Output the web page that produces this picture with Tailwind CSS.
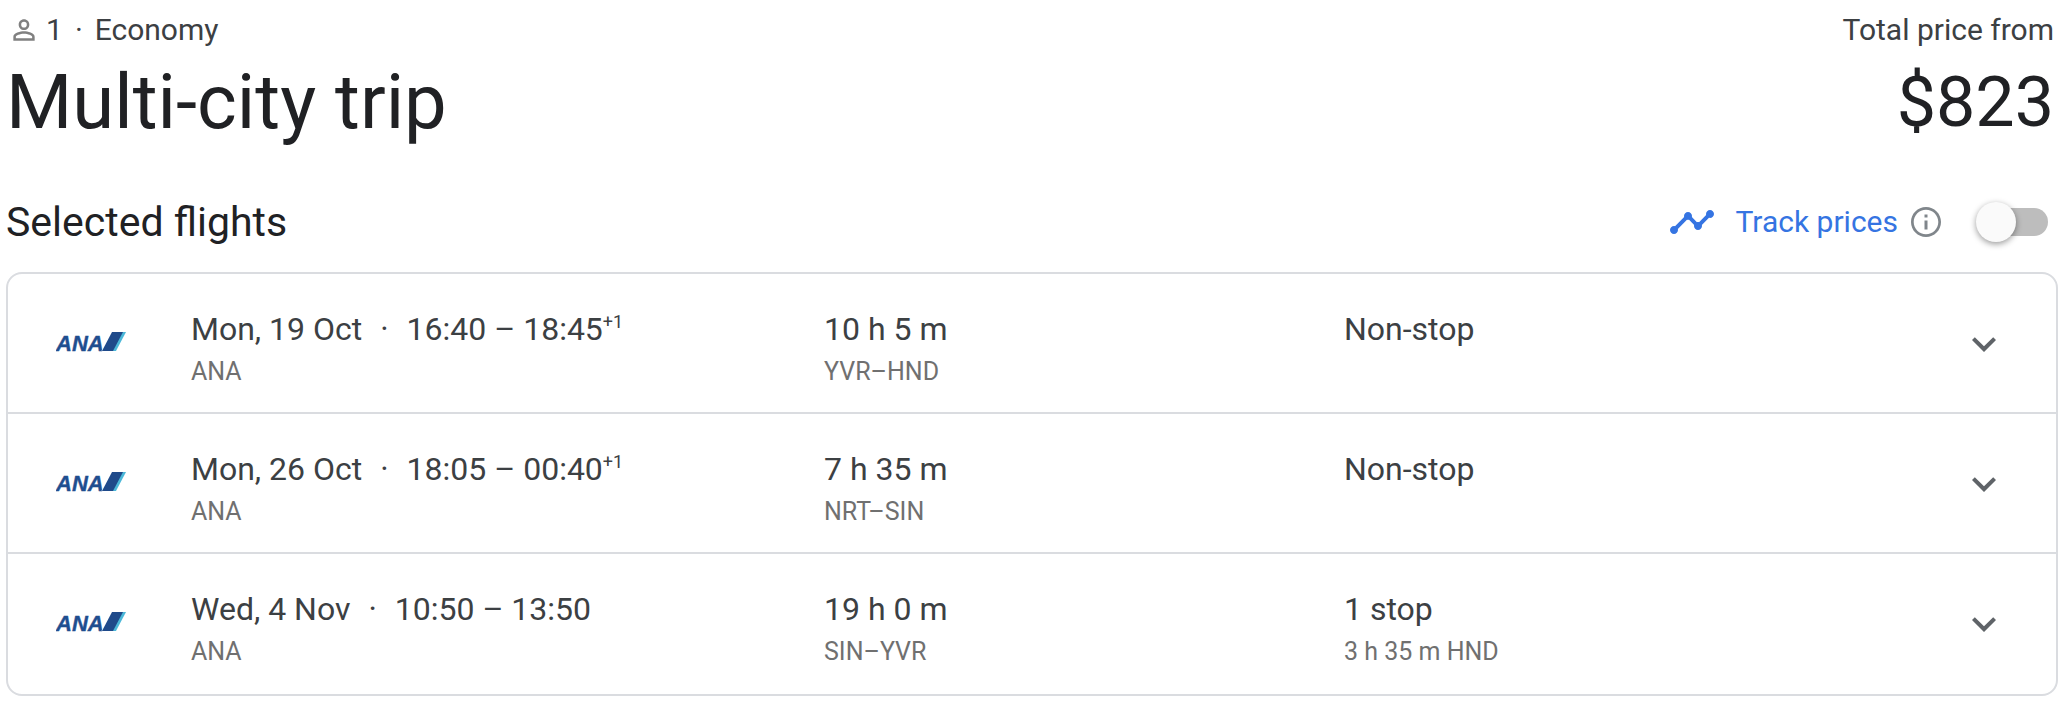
<!DOCTYPE html>
<html lang="en">
<head>
  <meta charset="UTF-8" />
  <meta name="viewport" content="width=device-width, initial-scale=1.0" />
  <title>Multi-city trip</title>
  <script src="https://cdn.jsdelivr.net/npm/@tailwindcss/browser@4"></script>
</head>
<body class="bg-white font-['Roboto',sans-serif] text-[#3c4043]">

  <!-- Shared icons -->
  <svg class="hidden" aria-hidden="true">
    <symbol id="ana" viewBox="0 0 72 20">
      <text x="0" y="19" font-family="Liberation Sans, sans-serif" font-size="22" font-weight="700" font-style="italic" fill="#1f4e8f" stroke="#1f4e8f" stroke-width="0.4">ANA</text>
      <path d="M56 0h12L58 19H46z" fill="#1f4a8a" stroke="#fff" stroke-width="1" paint-order="stroke" />
      <path d="M67 0h3L60 19h-3z" fill="#4cb8d8" />
    </symbol>
    <symbol id="chevron" viewBox="0 0 24 24">
      <path d="M7.41 8.59 12 13.17l4.59-4.58L18 10l-6 6-6-6z" />
    </symbol>
  </svg>

  <main class="pl-1.5 pr-3">
    <!-- Trip header -->
    <header class="flex justify-between pr-1 pt-2.5">
      <div>
        <div class="flex h-10 items-center text-[30px] leading-10">
          <svg class="ml-0.5 h-8 w-8 fill-[#808080]" viewBox="0 0 24 24" role="img" aria-label="Passengers">
            <path d="M12 5.9a2.1 2.1 0 1 1 0 4.2 2.1 2.1 0 0 1 0-4.2m0 9c2.97 0 6.1 1.46 6.1 2.1v1.1H5.9V17c0-.64 3.13-2.1 6.1-2.1M12 4C9.79 4 8 5.79 8 8s1.79 4 4 4 4-1.79 4-4-1.79-4-4-4zm0 9c-2.67 0-8 1.34-8 4v3h16v-3c0-2.66-5.33-4-8-4z" />
          </svg>
          <span class="ml-1.5">1</span>
          <span class="mx-3">·</span>
          <span>Economy</span>
        </div>
        <h1 class="text-[76px] leading-[104px] text-[#202124]">Multi-city trip</h1>
      </div>
      <div class="text-right">
        <p class="text-[30px] leading-10">Total price from</p>
        <p class="text-[70px] leading-[104px] text-[#202124]">$823</p>
      </div>
    </header>

    <!-- Selected flights heading and price tracking -->
    <div class="mt-8 flex h-[72px] items-center justify-between">
      <h2 class="text-[41px] leading-[56px] text-[#202124]">Selected flights</h2>
      <div class="flex items-center pr-2.5">
        <svg class="h-12 w-12 fill-[#3574e2]" viewBox="0 0 24 24" aria-hidden="true">
          <path d="M23 8c0 1.1-.9 2-2 2-.18 0-.35-.02-.51-.07l-3.56 3.55c.05.16.07.34.07.52 0 1.1-.9 2-2 2s-2-.9-2-2c0-.18.02-.36.07-.52l-2.55-2.55c-.16.05-.34.07-.52.07s-.36-.02-.52-.07l-4.55 4.56c.05.16.07.33.07.51 0 1.1-.9 2-2 2s-2-.9-2-2 .9-2 2-2c.18 0 .35.02.51.07l4.56-4.55C8.02 9.36 8 9.18 8 9c0-1.1.9-2 2-2s2 .9 2 2c0 .18-.02.36-.07.52l2.55 2.55c.16-.05.34-.07.52-.07s.36.02.52.07l3.55-3.56C19.02 8.35 19 8.18 19 8c0-1.1.9-2 2-2s2 .9 2 2z" />
        </svg>
        <label for="track" class="ml-5 text-[30px] leading-10 text-[#3574e2]">Track prices</label>
        <button type="button" class="ml-2.5" aria-label="About price tracking">
          <svg class="h-9 w-9 fill-[#80868b]" viewBox="0 0 24 24">
            <path d="M11 7h2v2h-2zm0 4h2v6h-2zm1-9C6.48 2 2 6.48 2 12s4.48 10 10 10 10-4.48 10-10S17.52 2 12 2zm0 18.2c-4.5 0-8.2-3.7-8.2-8.2S7.5 3.8 12 3.8s8.2 3.7 8.2 8.2-3.7 8.2-8.2 8.2z" />
          </svg>
        </button>
        <input id="track" type="checkbox" role="switch" class="ml-9 flex h-7 w-[68px] appearance-none items-center rounded-full bg-[#bdbdbd] before:-ml-1 before:block before:size-10 before:rounded-full before:bg-[#fafafa] before:shadow-[0_2px_6px_rgba(0,0,0,0.4)] checked:justify-end checked:bg-[#8ab4f8] checked:before:bg-[#1a73e8]" />
      </div>
    </div>

    <!-- Flights -->
    <ul class="mt-3.5 divide-y-2 divide-[#dadce0] rounded-2xl border-2 border-[#dadce0] pb-0.5">
      <li class="grid grid-cols-[183px_633fr_520fr_640fr_72px] pt-[35px] pb-7">
        <svg class="ml-12 mt-[23px] h-5 w-[72px]" role="img" aria-label="ANA"><use href="#ana" /></svg>
        <div>
          <p class="text-[32px] leading-10">Mon, 19 Oct<span class="mx-[18px]">·</span>16:40 – 18:45<sup class="-top-3 text-[18px] leading-none">+1</sup></p>
          <p class="mt-[11px] text-[25px] leading-6 text-[#707070]">ANA</p>
        </div>
        <div>
          <p class="text-[32px] leading-10">10 h 5 m</p>
          <p class="mt-[11px] text-[25px] leading-6 text-[#707070]">YVR–HND</p>
        </div>
        <div>
          <p class="text-[32px] leading-10">Non-stop</p>
        </div>
        <button type="button" class="-ml-6 mt-[11px] size-12" aria-label="Flight details, 19 October">
          <svg class="size-12 fill-[#5f6368]"><use href="#chevron" /></svg>
        </button>
      </li>
      <li class="grid grid-cols-[183px_633fr_520fr_640fr_72px] pt-[35px] pb-7">
        <svg class="ml-12 mt-[23px] h-5 w-[72px]" role="img" aria-label="ANA"><use href="#ana" /></svg>
        <div>
          <p class="text-[32px] leading-10">Mon, 26 Oct<span class="mx-[18px]">·</span>18:05 – 00:40<sup class="-top-3 text-[18px] leading-none">+1</sup></p>
          <p class="mt-[11px] text-[25px] leading-6 text-[#707070]">ANA</p>
        </div>
        <div>
          <p class="text-[32px] leading-10">7 h 35 m</p>
          <p class="mt-[11px] text-[25px] leading-6 text-[#707070]">NRT–SIN</p>
        </div>
        <div>
          <p class="text-[32px] leading-10">Non-stop</p>
        </div>
        <button type="button" class="-ml-6 mt-[11px] size-12" aria-label="Flight details, 26 October">
          <svg class="size-12 fill-[#5f6368]"><use href="#chevron" /></svg>
        </button>
      </li>
      <li class="grid grid-cols-[183px_633fr_520fr_640fr_72px] pt-[35px] pb-7">
        <svg class="ml-12 mt-[23px] h-5 w-[72px]" role="img" aria-label="ANA"><use href="#ana" /></svg>
        <div>
          <p class="text-[32px] leading-10">Wed, 4 Nov<span class="mx-[18px]">·</span>10:50 – 13:50</p>
          <p class="mt-[11px] text-[25px] leading-6 text-[#707070]">ANA</p>
        </div>
        <div>
          <p class="text-[32px] leading-10">19 h 0 m</p>
          <p class="mt-[11px] text-[25px] leading-6 text-[#707070]">SIN–YVR</p>
        </div>
        <div>
          <p class="text-[32px] leading-10">1 stop</p>
          <p class="mt-[11px] text-[25px] leading-6 text-[#707070]">3 h 35 m HND</p>
        </div>
        <button type="button" class="-ml-6 mt-[11px] size-12" aria-label="Flight details, 4 November">
          <svg class="size-12 fill-[#5f6368]"><use href="#chevron" /></svg>
        </button>
      </li>
    </ul>
  </main>

</body>
</html>
